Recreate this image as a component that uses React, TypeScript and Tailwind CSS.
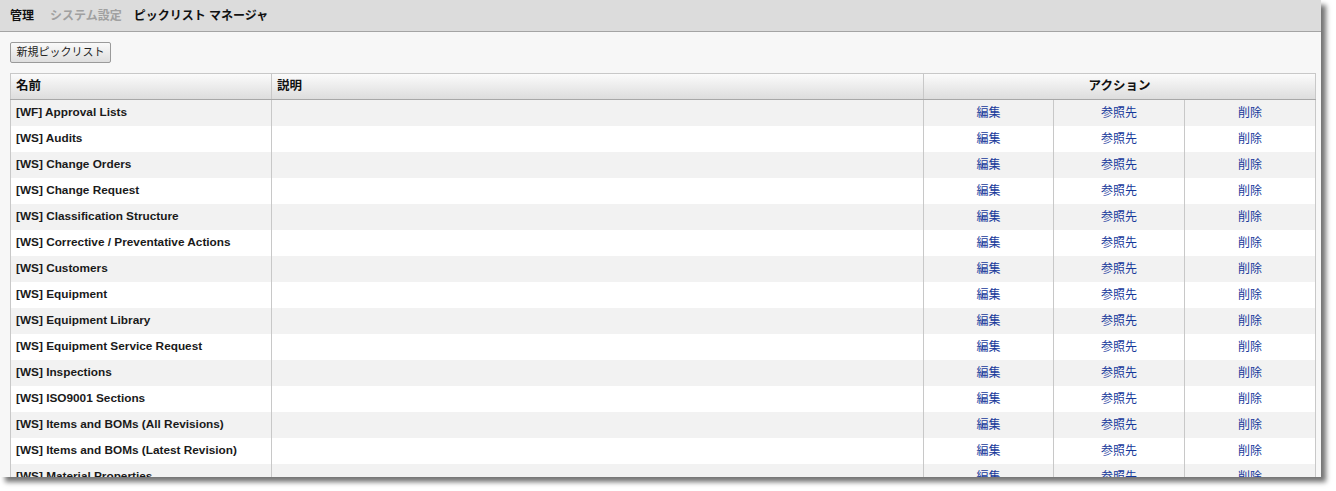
import React from "react";

const rows = [
  "[WF] Approval Lists",
  "[WS] Audits",
  "[WS] Change Orders",
  "[WS] Change Request",
  "[WS] Classification Structure",
  "[WS] Corrective / Preventative Actions",
  "[WS] Customers",
  "[WS] Equipment",
  "[WS] Equipment Library",
  "[WS] Equipment Service Request",
  "[WS] Inspections",
  "[WS] ISO9001 Sections",
  "[WS] Items and BOMs (All Revisions)",
  "[WS] Items and BOMs (Latest Revision)",
  "[WS] Material Properties",
];

const actions = ["編集", "参照先", "削除"];

export default function App() {
  return (
    <div className="h-[491px] w-[1336px] bg-white font-['Liberation_Sans','Noto_Sans_CJK_JP',sans-serif]">
      <div className="flex h-[477px] w-[1321px] flex-col overflow-hidden bg-[#f7f7f7] shadow-[5px_5px_5px_rgba(0,0,0,0.55)]">
        {/* Breadcrumb bar */}
        <div className="flex h-[32px] shrink-0 items-center border-b border-[#a4a4a4] bg-[#dcdcdc] pl-[10px] text-[12px] font-bold">
          <span className="text-[#111]">管理</span>
          <span className="ml-[16px] text-[#a0a0a0]">システム設定</span>
          <span className="ml-[12px] text-[#111]">ピックリスト マネージャ</span>
        </div>

        <div className="px-[10px] pt-[10px]">
          <button className="block h-[21px] w-[101px] rounded-[2px] border border-[#9a9a9a] bg-gradient-to-b from-[#fafafa] to-[#dedede] text-[11px] text-[#222]">
            新規ピックリスト
          </button>

          <table className="mt-[10px] w-[1305px] table-fixed border-collapse text-[11.8px]">
            <colgroup>
              <col className="w-[261px]" />
              <col className="w-[652px]" />
              <col className="w-[130px]" />
              <col className="w-[131px]" />
              <col className="w-[131px]" />
            </colgroup>
            <thead>
              <tr className="h-[26px] bg-gradient-to-b from-[#fbfbfb] to-[#dcdcdc] text-[12.5px] font-bold text-[#111]">
                <th className="border border-[#c8c8c8] border-b-[#a8a8a8] pl-[5px] text-left">名前</th>
                <th className="border border-[#c8c8c8] border-b-[#a8a8a8] pl-[5px] text-left">説明</th>
                <th colSpan={3} className="border border-[#c8c8c8] border-b-[#a8a8a8] text-center">
                  アクション
                </th>
              </tr>
            </thead>
            <tbody>
              {rows.map((name, i) => (
                <tr key={name} className={`h-[26px] ${i % 2 === 0 ? "bg-[#f2f2f2]" : "bg-white"}`}>
                  <td className="border-x border-[#c8c8c8] pl-[5px] font-bold whitespace-nowrap text-[#1a1a1a]">{name}</td>
                  <td className="border-x border-[#c8c8c8]" />
                  {actions.map((a) => (
                    <td key={a} className="border-x border-[#c8c8c8] text-center text-[12px] text-[#17399b]">
                      <a>{a}</a>
                    </td>
                  ))}
                </tr>
              ))}
            </tbody>
          </table>
        </div>
      </div>
    </div>
  );
}
